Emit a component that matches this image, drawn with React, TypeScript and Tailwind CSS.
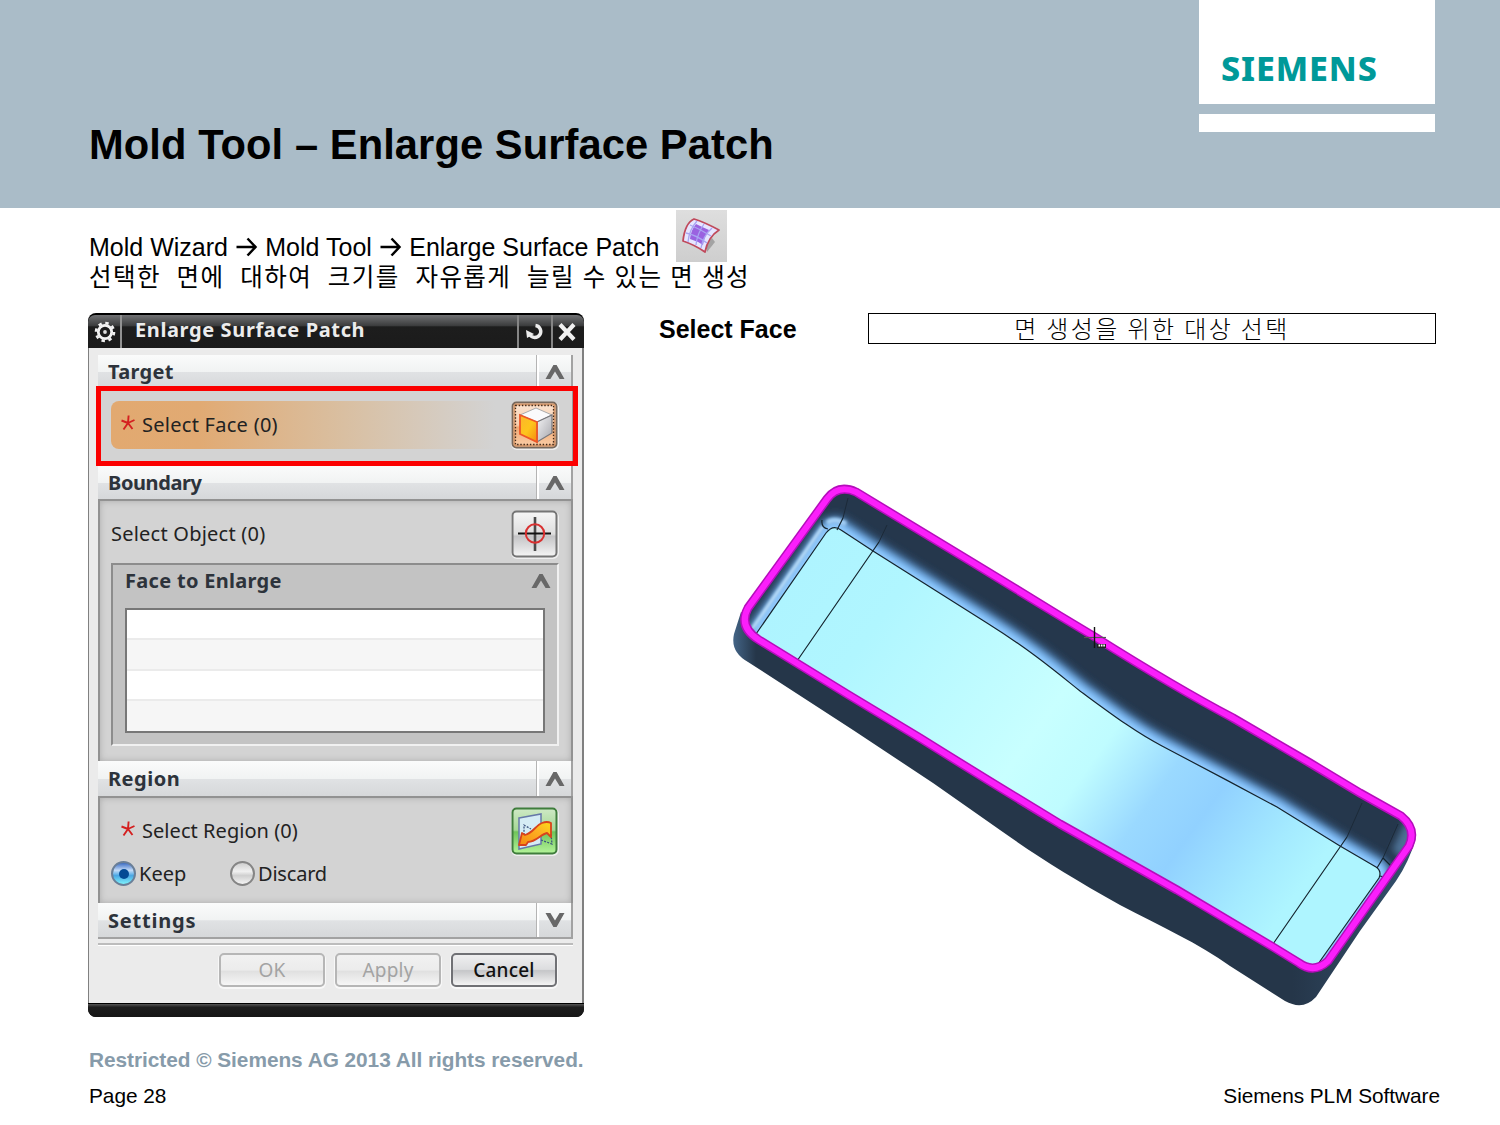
import React from "react";

type SectionHeaderProps = {
  title: string;
  open?: boolean;
  className?: string;
};

const RIM_PATH =
  "M827 499 Q838 484 856 492 L970 561 L1060 616 L1095 637 C1130 659 1180 690 1233 718 L1310 763 L1360 793 L1401 816 Q1417 829 1409 846 L1328 961 Q1314 974 1299 963 L1273 947 L1177 890 L1060 824 C1000 788 960 763 920 738 L847 694 L759 640 Q738 627 748 608 Z";

const FLOOR_EDGE =
  "M756 634 L826 533 Q833 524 841 530 L873 551 L987 623 C1030 650 1055 671 1080 691 C1110 713 1135 732 1162 746 C1198 765 1240 787 1277 807 L1340 846 L1376 867 Q1382 871 1379 878 L1318 964";

const OUTER_BODY =
  "M741 612 L734 634 Q730 652 748 662 L853 730 L933 783 L1000 830 C1035 855 1070 877 1120 905 C1160 926 1200 944 1230 966 L1285 1001 Q1303 1011 1316 997 L1360 931 L1396 881 Q1409 862 1416 838 L1310 900 L1000 780 Z";

const Chevron = ({ down = false }: { down?: boolean }) => (
  <svg
    width="20"
    height="14"
    viewBox="0 0 20 14"
    className={down ? "rotate-180" : ""}
  >
    <path d="M0.5 14 L8.4 0 H11.6 L19.5 14 H14.6 L10 6.4 L5.4 14 Z" fill="#686868" />
  </svg>
);

const SectionHeader: React.FC<SectionHeaderProps> = ({
  title,
  open = true,
  className = "",
}) => (
  <div
    className={`flex shrink-0 items-stretch border-r-2 border-[#a2a2a2] bg-[linear-gradient(#fafbfb,#f1f3f3_50%,#e0e2e4_52%,#d6d8da)] ${className}`}
  >
    <h3 className="flex flex-1 items-center pl-2.5 pt-px text-[20px] font-bold leading-none text-[#2d333b]">
      {title}
    </h3>
    <div className="flex w-[35px] items-center justify-center border-l border-[#b4b4b4] pl-px shadow-[inset_2px_0_0_#fff]">
      <Chevron down={!open} />
    </div>
  </div>
);

const Required = () => (
  <svg width="14" height="16" viewBox="0 0 14 16" stroke="#d42020" strokeWidth="1.9" className="relative -top-[2px]">
    <path d="M7.6 0.5 L7 8 M7 8 L0.5 5.5 M7 8 L13.5 5 M7 8 L2.5 14.5 M7 8 L11.5 14" />
  </svg>
);

const GearIcon = () => (
  <svg width="22" height="22" viewBox="0 0 22 22" fill="none" stroke="#f2f2f2">
    <circle cx="11" cy="11" r="6.7" strokeWidth="2.8" />
    <circle cx="11" cy="11" r="9" strokeWidth="2.6" strokeDasharray="3.4 3.67" />
    <circle cx="11" cy="11" r="1.9" fill="#ddd" stroke="none" />
  </svg>
);

const ArrowRight = () => (
  <svg
    width="22"
    height="20"
    viewBox="0 0 22 20"
    className="relative top-px mx-[7.7px] inline-block align-baseline"
    fill="none"
    stroke="#000"
    strokeWidth="2.5"
  >
    <path d="M0.5 10 H19 M11.5 1.5 L19.5 10 L11.5 18.5" />
  </svg>
);

const SurfaceIcon = () => (
  <svg width="51" height="52" viewBox="0 0 51 52">
    <defs>
      <linearGradient id="surfBg" x1="0" y1="0" x2="0" y2="1">
        <stop offset="0" stopColor="#dedede" />
        <stop offset="1" stopColor="#cecece" />
      </linearGradient>
    </defs>
    <rect width="51" height="52" fill="url(#surfBg)" />
    <path d="M31 42 L39 32 L36 28 L31 33 Z" fill="#a3a3a3" />
    <path
      d="M7 31 Q9 13 18 9 Q28 12 43 20 Q32 27 29 42 Q19 35 7 31 Z"
      fill="#e6e6ff"
      stroke="#c04a5c"
      strokeWidth="1.8"
      strokeLinejoin="round"
    />
    <path d="M14 29 Q15 20 20 14 Q26 17 33 20 Q28 27 27 35 Q21 31 14 29 Z" fill="#9a62e0" />
    <path
      d="M10 23 Q20 25 31 33 M14 15 Q24 19 35 26 M12 32 Q13 20 21 11 M20 35 Q21 24 28 14 M25 38 Q27 26 36 18"
      fill="none"
      stroke="#a9a4f2"
      strokeWidth="1.3"
    />
  </svg>
);

const FaceIcon = () => (
  <svg width="48" height="49" viewBox="0 0 48 49">
    <defs>
      <linearGradient id="faceBg" x1="0" y1="0" x2="0" y2="1">
        <stop offset="0" stopColor="#fbe4d2" />
        <stop offset="0.5" stopColor="#f8cfae" />
        <stop offset="0.55" stopColor="#f0a974" />
        <stop offset="1" stopColor="#fbd0ab" />
      </linearGradient>
      <linearGradient id="faceOrange" x1="0" y1="0" x2="1" y2="1">
        <stop offset="0" stopColor="#fcb52c" />
        <stop offset="0.5" stopColor="#fdc51c" />
        <stop offset="1" stopColor="#f58a12" />
      </linearGradient>
      <linearGradient id="faceGrey" x1="0" y1="0" x2="1" y2="1">
        <stop offset="0" stopColor="#f4f4f6" />
        <stop offset="1" stopColor="#a6a6ac" />
      </linearGradient>
    </defs>
    <rect x="1" y="2" width="46" height="46" rx="5" fill="none" stroke="#efefef" strokeWidth="2" />
    <rect x="1.5" y="1.5" width="44" height="45" rx="4" fill="url(#faceBg)" stroke="#77685c" strokeWidth="2" />
    <rect x="3.5" y="3.5" width="40" height="41" rx="1" fill="none" stroke="#d99a6c" strokeWidth="2" />
    <rect x="4.5" y="4.5" width="38" height="39" fill="none" stroke="#40291a" strokeWidth="1.3" strokeDasharray="1.4 1.8" />
    <path d="M9 14 L25 7 L41 14 L26 21 Z" fill="#fafafc" stroke="#aaa" strokeWidth="1" />
    <path d="M26 21 L41 14 V32 L26 41 Z" fill="url(#faceGrey)" stroke="#77777c" strokeWidth="1.2" />
    <path d="M9 14 L26 21 V41 L9 33 Z" fill="url(#faceOrange)" stroke="#ee5626" strokeWidth="1.8" />
  </svg>
);

const TargetIcon = () => (
  <svg width="48" height="49" viewBox="0 0 48 49">
    <defs>
      <linearGradient id="targetBg" x1="0" y1="0" x2="0" y2="1">
        <stop offset="0" stopColor="#f6f6f6" />
        <stop offset="0.5" stopColor="#dedede" />
        <stop offset="0.55" stopColor="#c4c4c6" />
        <stop offset="1" stopColor="#f5f5f5" />
      </linearGradient>
    </defs>
    <rect x="1" y="2" width="46" height="46" rx="5" fill="none" stroke="#efefef" strokeWidth="2" />
    <rect x="1.5" y="1.5" width="44" height="45" rx="4" fill="url(#targetBg)" stroke="#757575" strokeWidth="2" />
    <path d="M24 7 V41" stroke="#4b4b4b" strokeWidth="2.6" />
    <path d="M7 23.5 H40" stroke="#111" strokeWidth="1.8" />
    <circle cx="24" cy="23.5" r="9.2" fill="none" stroke="#d93030" strokeWidth="2" />
  </svg>
);

const RegionIcon = () => (
  <svg width="48" height="49" viewBox="0 0 48 49">
    <defs>
      <linearGradient id="regionBg" x1="0" y1="0" x2="0" y2="1">
        <stop offset="0" stopColor="#cfe9c6" />
        <stop offset="0.48" stopColor="#a5d795" />
        <stop offset="0.52" stopColor="#6fc45a" />
        <stop offset="1" stopColor="#b4f49a" />
      </linearGradient>
      <linearGradient id="regionArrow" x1="0" y1="1" x2="1" y2="0">
        <stop offset="0" stopColor="#f58a10" />
        <stop offset="0.6" stopColor="#fdb022" />
        <stop offset="1" stopColor="#fbdc18" />
      </linearGradient>
    </defs>
    <rect x="1" y="2" width="46" height="46" rx="5" fill="none" stroke="#efefef" strokeWidth="2" />
    <rect x="1.5" y="1.5" width="44" height="45" rx="4" fill="url(#regionBg)" stroke="#3f7d3c" strokeWidth="2" />
    <path d="M8 11 L30 7 V37 L8 42 Z" fill="#d5ecf5" stroke="#6678a8" strokeWidth="1.5" />
    <path d="M13 28 V18 L20 22 M30 33 L41 37 L40 27" fill="none" stroke="#3e5580" strokeWidth="1.3" strokeDasharray="2 1.3" />
    <path
      d="M8 38 L11 26 L14 28 C22 26 25 18 31 16 Q36 14 40 16 V30 L36 26 C30 27 25 35 17 35 L15 38 Z"
      fill="url(#regionArrow)"
      stroke="#d8431c"
      strokeWidth="1.8"
      strokeLinejoin="round"
    />
  </svg>
);

const Radio = ({ checked = false }: { checked?: boolean }) => (
  <span
    className={
      checked
        ? "flex size-[25px] items-center justify-center rounded-full border-2 border-[#6a7f98] bg-[linear-gradient(#3b6cc4,#c4dcf8_35%,#4aa7e4_60%,#7df2fb)]"
        : "flex size-[25px] items-center justify-center rounded-full border-2 border-[#858585] bg-[linear-gradient(#cfcfcf,#f0f0f0_40%,#cfcfcf_60%,#f4f4f4)]"
    }
  >
    {checked && <span className="size-[10px] rounded-full bg-[#044a94]" />}
  </span>
);

const FooterButton = ({
  label,
  disabled = false,
}: {
  label: string;
  disabled?: boolean;
}) => (
  <button
    className={`h-[34px] w-[106px] rounded-[5px] border-2 text-[19px] leading-none tracking-[0.2px] ${
      disabled
        ? "border-[#b6b6b6] bg-[linear-gradient(#f1f1f1,#ececec_50%,#e0e0e0_54%,#f6f6f6)] text-[#a3a3a3]"
        : "border-[#707175] bg-[linear-gradient(#efeff0,#dcdddf_48%,#c5c6c8_52%,#f4f4f4)] font-medium text-[#111]"
    } shadow-[0_1px_0_1px_#f8f8f8]`}
  >
    {label}
  </button>
);

const EnlargeDialog = () => (
  <div className="flex h-[704px] w-[496px] flex-col overflow-hidden rounded-[8px] bg-black font-['Noto_Sans','Open_Sans',sans-serif] text-[#222]">
    {/* Title bar */}
    <div className="mt-[2px] flex h-[33px] shrink-0 items-stretch rounded-t-[7px] bg-[linear-gradient(#707173,#3c3d3e_32%,#1d1d1d_36%,#1b1b1b)]">
      <div className="flex w-[34px] items-center justify-center border-r-2 border-[#929292] pl-[2px] pt-[1px]">
        <GearIcon />
      </div>
      <h2 className="flex-1 pl-[13px] pt-[1px] text-[20px] font-bold leading-[28px] tracking-[0.62px] text-[#ececec]">
        Enlarge Surface Patch
      </h2>
      <div className="flex w-[34px] items-center justify-center border-l-2 border-[#858585]">
        <svg width="18" height="18" viewBox="0 0 18 18" fill="none" stroke="#ececec" strokeWidth="3.4">
          <path d="M9.5 2.5 A6 6 0 1 1 3.6 11.5" />
          <path d="M0 7 L8 11 L1 15 Z" fill="#ececec" stroke="none" />
        </svg>
      </div>
      <div className="flex w-[33px] items-center justify-center border-l-2 border-[#858585] pr-[4px]">
        <svg width="18" height="18" viewBox="0 0 18 18" stroke="#f0f0f0" strokeWidth="4.2">
          <path d="M2 1.5 L16 16.5 M16 1.5 L2 16.5" />
        </svg>
      </div>
    </div>

    {/* Body */}
    <div className="flex flex-1 flex-col border-l border-r-2 border-[#808080] bg-[#ebebeb] pl-[9px] pr-[9px] pt-[7px]">
      <SectionHeader title="Target" className="h-[33px] tracking-[0.3px]" />
      <div className="relative flex h-[78px] shrink-0 items-center border border-[#9a9a9a] bg-[#d3d3d3] pb-[4px] pl-3 pr-[13px]">
        <div className="flex h-[48px] flex-1 items-center gap-[7px] rounded-l-[8px] bg-[linear-gradient(90deg,#e2a970,#e1aa73_22%,#d9bfa1_58%,#d3d3d3_96%)] pl-[10px]">
          <Required />
          <span className="text-[20px] leading-none tracking-[0.27px]">Select Face (0)</span>
        </div>
        <FaceIcon />
        {/* Highlight frame over the active step */}
        <div className="absolute -left-[3px] -right-[6px] -top-[3px] h-[80px] border-[5px] border-[#fb0000]" />
      </div>

      <SectionHeader title="Boundary" className="h-[33px] tracking-[-0.4px]" />
      <div className="flex h-[262px] shrink-0 flex-col border-l-2 border-r-2 border-t-2 border-[#929292] bg-[#d3d3d3] pl-[11px] pr-[12px] pt-[9px] shadow-[inset_0_0_6px_#aaa]">
        <div className="flex h-[49px] items-center justify-between">
          <span className="pb-px text-[20px] leading-none tracking-[0.23px]">Select Object (0)</span>
          <TargetIcon />
        </div>
        <div className="mt-[4px] flex h-[183px] flex-col border-2 border-b-[#f0f0f0] border-l-[#8c8c8c] border-r-[#f0f0f0] border-t-[#8c8c8c] bg-[#c3c3c3] pl-[12px] pr-[12px]">
          <div className="flex h-[43px] items-start justify-between pt-[6px]">
            <span className="text-[20px] font-bold leading-none tracking-[0.3px] text-[#2d333b]">
              Face to Enlarge
            </span>
            <span className="-mr-[6px] pt-[3px]">
              <Chevron />
            </span>
          </div>
          <div className="grid h-[125px] grid-rows-4 divide-y-2 divide-[#ebebeb] border-2 border-[#777]">
            <div className="bg-white" />
            <div className="bg-[#f6f6f6]" />
            <div className="bg-white" />
            <div className="bg-[#f6f6f6]" />
          </div>
        </div>
      </div>

      <SectionHeader title="Region" className="h-[35px] tracking-[0.5px]" />
      <div className="flex h-[107px] shrink-0 flex-col border-l-2 border-r-2 border-t-2 border-[#929292] bg-[#d3d3d3] pl-[11px] pr-[12px] pt-[9px] shadow-[inset_0_0_6px_#aaa]">
        <div className="flex h-[49px] items-center">
          <div className="flex flex-1 items-center gap-[7px] pb-[2px] pl-[10px]">
            <Required />
            <span className="text-[20px] leading-none tracking-[0.05px]">Select Region (0)</span>
          </div>
          <RegionIcon />
        </div>
        <div className="mt-[5px] flex items-center text-[20px] leading-none">
          <Radio checked />
          <span className="w-[94px] pl-[3px]">Keep</span>
          <Radio />
          <span className="pl-[3px] tracking-[-0.2px]">Discard</span>
        </div>
      </div>

      <SectionHeader
        title="Settings"
        open={false}
        className="h-[36px] border-b-2 border-b-[#a2a2a2] tracking-[0.8px]"
      />
      <div className="mt-[4px] h-[3px] shrink-0 border-b border-t-2 border-b-white border-t-[#bcbcbc]" />
      <div className="flex justify-end gap-[10px] pr-[16px] pt-[7px]">
        <FooterButton label="OK" disabled />
        <FooterButton label="Apply" disabled />
        <FooterButton label="Cancel" />
      </div>
    </div>

    {/* Bottom edge */}
    <div className="h-[14px] shrink-0 border-t border-black bg-[linear-gradient(#555,#1d1d1d_25%,#161616)]" />
  </div>
);

const TrayModel = () => (
  <svg width="700" height="546" viewBox="728 470 700 546">
    <defs>
      <clipPath id="inside">
        <path d={RIM_PATH} />
      </clipPath>
      <linearGradient id="floor" gradientUnits="userSpaceOnUse" x1="790" y1="580" x2="1310" y2="952">
        <stop offset="0" stopColor="#aef4ff" />
        <stop offset="0.15" stopColor="#b0f6ff" />
        <stop offset="0.45" stopColor="#c8ffff" />
        <stop offset="0.55" stopColor="#bffcff" />
        <stop offset="0.66" stopColor="#9ad9ff" />
        <stop offset="0.74" stopColor="#91d1ff" />
        <stop offset="0.86" stopColor="#a4eaff" />
        <stop offset="0.93" stopColor="#aef5ff" />
        <stop offset="1" stopColor="#aef5ff" />
      </linearGradient>
      <linearGradient id="outer" gradientUnits="userSpaceOnUse" x1="732" y1="0" x2="1416" y2="0">
        <stop offset="0" stopColor="#45678a" />
        <stop offset="0.035" stopColor="#253649" />
        <stop offset="0.82" stopColor="#253649" />
        <stop offset="0.87" stopColor="#2a3e54" />
        <stop offset="1" stopColor="#33506e" />
      </linearGradient>
      <filter id="soft" filterUnits="userSpaceOnUse" x="728" y="470" width="700" height="546">
        <feGaussianBlur stdDeviation="3.5" />
      </filter>
      <filter id="softer" filterUnits="userSpaceOnUse" x="728" y="470" width="700" height="546">
        <feGaussianBlur stdDeviation="3" />
      </filter>
      <filter id="glow" filterUnits="userSpaceOnUse" x="728" y="470" width="700" height="546">
        <feGaussianBlur stdDeviation="1.5" />
      </filter>
    </defs>

    <path d={OUTER_BODY} fill="url(#outer)" />
    <g clipPath="url(#inside)" fill="none">
      <path d={RIM_PATH} fill="#25374c" />
      <path d="M1392 850 L1406 820 L1420 830 L1404 860 Z" fill="#4d7194" filter="url(#soft)" />
      {/* Fillet between wall and floor */}
      <path d={FLOOR_EDGE} stroke="#35597f" strokeWidth="28" filter="url(#soft)" />
      <path d={FLOOR_EDGE} stroke="#7fbcf6" strokeWidth="17" filter="url(#softer)" />
      <path d={FLOOR_EDGE} stroke="#8fc8fb" strokeWidth="6" filter="url(#glow)" />
      <path d="M752 629 L823 526" stroke="#c4e6ff" strokeWidth="3" filter="url(#glow)" />
      <path d="M827 523 Q834 517 846 524" stroke="#a6d2f8" strokeWidth="5" filter="url(#glow)" />
      <path d={`${FLOOR_EDGE} L1300 975 L740 650 Z`} fill="url(#floor)" />
      <path d={FLOOR_EDGE} stroke="#15242e" strokeWidth="1.2" />
      <path
        d="M879 542 L797 661 M1347 837 L1273 944 M843 518 L837 530 M822 520 Q821 528 828 529 M1383 858 L1377 868 M1383 858 L1391 866 M1380 876 L1384 877"
        stroke="#15242e"
        strokeWidth="1.2"
      />
      <path
        d="M887 525 L879 542 M848 498 L843 518 M1362 803 L1347 837 M1398 824 L1383 858"
        stroke="#1c2a38"
        strokeWidth="1"
      />
    </g>
    <path d={RIM_PATH} fill="none" stroke="#b50dbb" strokeWidth="9" />
    <path d={RIM_PATH} fill="none" stroke="#fb1ffb" strokeWidth="6" />

    {/* Pick cursor */}
    <path d="M1084 637.5 H1106" stroke="#555" strokeWidth="1.2" />
    <path d="M1094.5 627 V648" stroke="#111" strokeWidth="1.4" />
    <rect x="1097" y="644" width="9" height="4" fill="#222" />
    <path d="M1098.5 645.5 H1105" stroke="#fff" strokeWidth="2" strokeDasharray="1.6 0.8" />
  </svg>
);

export default function App() {
  return (
    <div className="flex h-[1125px] w-[1500px] flex-col overflow-hidden bg-white font-['Liberation_Sans','Noto_Sans_CJK_KR',sans-serif] text-black">
      <header className="flex h-[208px] shrink-0 justify-between bg-[#aabcc8] pl-[89px] pr-[65px]">
        <h1 className="pt-[121px] text-[41.67px] font-bold leading-[48px] tracking-[0.08px]">
          Mold Tool – Enlarge Surface Patch
        </h1>
        <div className="flex w-[236px] flex-col gap-[10px]">
          <div className="h-[104px] bg-white pl-[22px] pt-[48px] font-['Noto_Sans','Open_Sans',sans-serif] text-[34px] font-extrabold leading-[40px] tracking-[0.9px] text-[#009999]">
            SIEMENS
          </div>
          <div className="h-[18px] bg-white" />
        </div>
      </header>

      <section className="flex h-[105px] shrink-0 flex-col pl-[89px] pt-[2px]">
        <div className="flex h-[52px]">
          <p className="w-[587px] whitespace-nowrap pt-[23px] text-[25px] leading-[28px]">
            Mold Wizard
            <ArrowRight />
            Mold Tool
            <ArrowRight />
            Enlarge Surface Patch
          </p>
          <SurfaceIcon />
        </div>
        <p className="whitespace-pre font-['Noto_Sans_CJK_KR',sans-serif] text-[24.5px] leading-[28px] tracking-[1.4px] [word-spacing:1px]">
          {"선택한  면에  대하여  크기를  자유롭게  늘릴 수 있는 면 생성"}
        </p>
      </section>

      <main className="flex h-[704px] shrink-0 pl-[88px]">
        <EnlargeDialog />
        <div className="flex flex-col pl-[75px]">
          <div className="flex h-[31px] items-center">
            <span className="w-[209px] pt-[2px] text-[25px] font-bold leading-none">Select Face</span>
            <div className="flex h-[31px] w-[568px] items-center justify-center border border-black pb-[2px] font-['Noto_Sans_CJK_KR',sans-serif] text-[24px] font-light leading-none tracking-[2.4px]">
              면 생성을 위한 대상 선택
            </div>
          </div>
          <div className="pl-[69px] pt-[126px]">
            <TrayModel />
          </div>
        </div>
      </main>

      <footer className="flex flex-1 flex-col pl-[89px] pr-[60px] pt-[31px]">
        <p className="text-[20.83px] font-bold leading-[24px] tracking-[-0.04px] text-[#879baa]">
          Restricted © Siemens AG 2013 All rights reserved.
        </p>
        <div className="mt-[12px] flex justify-between text-[20.83px] leading-[24px] tracking-[-0.05px]">
          <span>Page 28</span>
          <span>Siemens PLM Software</span>
        </div>
      </footer>
    </div>
  );
}
